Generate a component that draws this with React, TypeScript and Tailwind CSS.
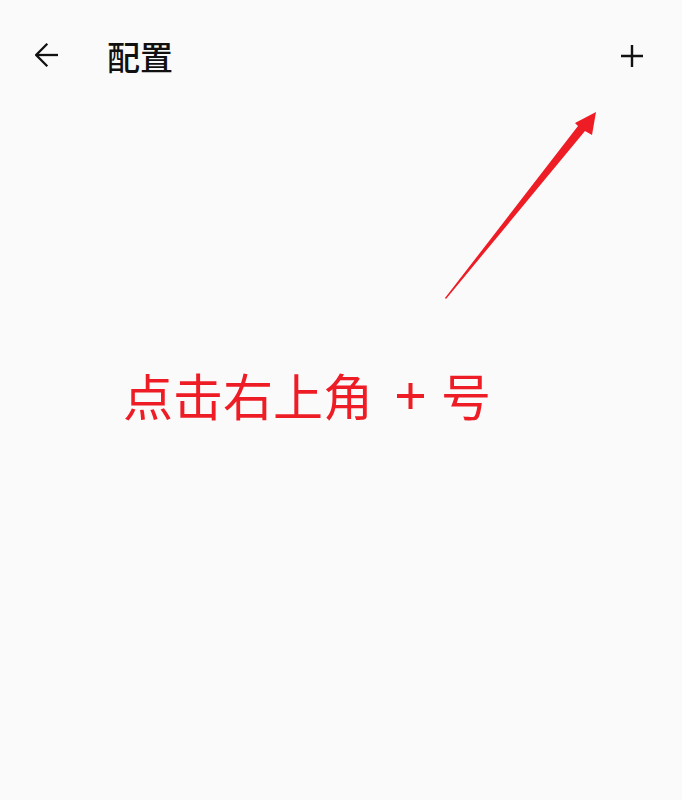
import React from 'react';

const cjk = { fontFamily: '"Noto Sans CJK SC", "Noto Sans", sans-serif' };

export default function App() {
  return (
    <div className="relative h-[800px] w-full bg-[#fafafa] overflow-hidden" style={cjk}>
      {/* Top bar */}
      <div className="flex h-[112px] items-start pt-[32px] pl-[35px] pr-[38px]">
        <button className="flex h-[46px] w-[24px] items-center justify-center text-[#111]">
          <svg width="24" height="24" viewBox="0 0 24 24" fill="none" stroke="currentColor" strokeWidth="2.3">
            <path d="M23 12H1.8" />
            <path d="M12.3 0.8 1.2 12l11.1 11.2" />
          </svg>
        </button>
        <h1 className="ml-[48px] text-[33px] leading-[48px] font-medium text-[#111]">配置</h1>
        <div className="flex-1" />
        <button className="flex h-[48px] w-[24px] items-center justify-center text-[#111]">
          <svg width="24" height="24" viewBox="0 0 24 24" fill="none" stroke="currentColor" strokeWidth="2.4">
            <path d="M12 1v22M1 12h22" />
          </svg>
        </button>
      </div>

      {/* Hint text */}
      <div className="mt-[252px] flex items-center pl-[123px] text-[50px] leading-[60px] text-[#ee1c25]">
        <span>点击右上角</span>
        <span className="inline-flex w-[68px] justify-start pl-[24px] pt-[4px]">
          <svg width="27" height="26" viewBox="0 0 27 26" fill="none" stroke="currentColor" strokeWidth="4">
            <path d="M13.5 0v26M0 13h27" />
          </svg>
        </span>
        <span>号</span>
      </div>

      {/* Annotation arrow */}
      <svg className="absolute left-0 top-0" width="682" height="800" viewBox="0 0 682 800">
        <polygon
          points="445,298 578,126 575,123 596,112 592,135 585,131 446,299"
          fill="#ee1c25"
        />
      </svg>
    </div>
  );
}
